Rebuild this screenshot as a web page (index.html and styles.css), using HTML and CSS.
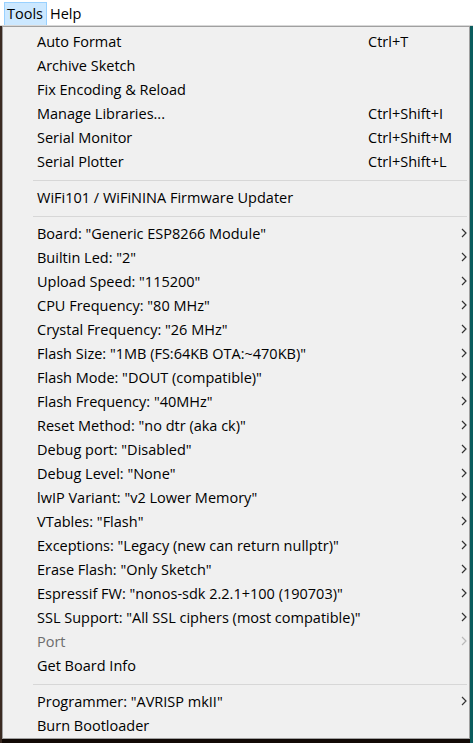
FILE: index.html
```html
<!DOCTYPE html>
<html>
<head>
<meta charset="utf-8">
<link rel="stylesheet" href="styles.css">
</head>
<body>
<div class="menubar">
  <span class="mb-item active">Tools</span>
  <span class="mb-item">Help</span>
</div>
<div class="stage">
  <div class="left-edge"></div>
  <div class="menu">
    <div class="item"><span class="label">Auto Format</span><span class="key">Ctrl+T</span><span class="arr"></span></div>
    <div class="item"><span class="label">Archive Sketch</span><span class="key"></span><span class="arr"></span></div>
    <div class="item"><span class="label">Fix Encoding &amp; Reload</span><span class="key"></span><span class="arr"></span></div>
    <div class="item"><span class="label">Manage Libraries...</span><span class="key">Ctrl+Shift+I</span><span class="arr"></span></div>
    <div class="item"><span class="label">Serial Monitor</span><span class="key">Ctrl+Shift+M</span><span class="arr"></span></div>
    <div class="item"><span class="label">Serial Plotter</span><span class="key">Ctrl+Shift+L</span><span class="arr"></span></div>
    <div class="sep"></div>
    <div class="item"><span class="label">WiFi101 / WiFiNINA Firmware Updater</span><span class="key"></span><span class="arr"></span></div>
    <div class="sep"></div>
    <div class="item sub"><span class="label">Board: "Generic ESP8266 Module"</span><span class="key"></span><span class="arr"><svg viewBox="0 0 6 10" width="6" height="10"><path d="M1 1 L5 5 L1 9" fill="none" stroke="currentColor" stroke-width="1.2"/></svg></span></div>
    <div class="item sub"><span class="label">Builtin Led: "2"</span><span class="key"></span><span class="arr"><svg viewBox="0 0 6 10" width="6" height="10"><path d="M1 1 L5 5 L1 9" fill="none" stroke="currentColor" stroke-width="1.2"/></svg></span></div>
    <div class="item sub"><span class="label">Upload Speed: "115200"</span><span class="key"></span><span class="arr"><svg viewBox="0 0 6 10" width="6" height="10"><path d="M1 1 L5 5 L1 9" fill="none" stroke="currentColor" stroke-width="1.2"/></svg></span></div>
    <div class="item sub"><span class="label">CPU Frequency: "80 MHz"</span><span class="key"></span><span class="arr"><svg viewBox="0 0 6 10" width="6" height="10"><path d="M1 1 L5 5 L1 9" fill="none" stroke="currentColor" stroke-width="1.2"/></svg></span></div>
    <div class="item sub"><span class="label">Crystal Frequency: "26 MHz"</span><span class="key"></span><span class="arr"><svg viewBox="0 0 6 10" width="6" height="10"><path d="M1 1 L5 5 L1 9" fill="none" stroke="currentColor" stroke-width="1.2"/></svg></span></div>
    <div class="item sub"><span class="label">Flash Size: "1MB (FS:64KB OTA:~470KB)"</span><span class="key"></span><span class="arr"><svg viewBox="0 0 6 10" width="6" height="10"><path d="M1 1 L5 5 L1 9" fill="none" stroke="currentColor" stroke-width="1.2"/></svg></span></div>
    <div class="item sub"><span class="label">Flash Mode: "DOUT (compatible)"</span><span class="key"></span><span class="arr"><svg viewBox="0 0 6 10" width="6" height="10"><path d="M1 1 L5 5 L1 9" fill="none" stroke="currentColor" stroke-width="1.2"/></svg></span></div>
    <div class="item sub"><span class="label">Flash Frequency: "40MHz"</span><span class="key"></span><span class="arr"><svg viewBox="0 0 6 10" width="6" height="10"><path d="M1 1 L5 5 L1 9" fill="none" stroke="currentColor" stroke-width="1.2"/></svg></span></div>
    <div class="item sub"><span class="label">Reset Method: "no dtr (aka ck)"</span><span class="key"></span><span class="arr"><svg viewBox="0 0 6 10" width="6" height="10"><path d="M1 1 L5 5 L1 9" fill="none" stroke="currentColor" stroke-width="1.2"/></svg></span></div>
    <div class="item sub"><span class="label">Debug port: "Disabled"</span><span class="key"></span><span class="arr"><svg viewBox="0 0 6 10" width="6" height="10"><path d="M1 1 L5 5 L1 9" fill="none" stroke="currentColor" stroke-width="1.2"/></svg></span></div>
    <div class="item sub"><span class="label">Debug Level: "None"</span><span class="key"></span><span class="arr"><svg viewBox="0 0 6 10" width="6" height="10"><path d="M1 1 L5 5 L1 9" fill="none" stroke="currentColor" stroke-width="1.2"/></svg></span></div>
    <div class="item sub"><span class="label">lwIP Variant: "v2 Lower Memory"</span><span class="key"></span><span class="arr"><svg viewBox="0 0 6 10" width="6" height="10"><path d="M1 1 L5 5 L1 9" fill="none" stroke="currentColor" stroke-width="1.2"/></svg></span></div>
    <div class="item sub"><span class="label">VTables: "Flash"</span><span class="key"></span><span class="arr"><svg viewBox="0 0 6 10" width="6" height="10"><path d="M1 1 L5 5 L1 9" fill="none" stroke="currentColor" stroke-width="1.2"/></svg></span></div>
    <div class="item sub"><span class="label">Exceptions: "Legacy (new can return nullptr)"</span><span class="key"></span><span class="arr"><svg viewBox="0 0 6 10" width="6" height="10"><path d="M1 1 L5 5 L1 9" fill="none" stroke="currentColor" stroke-width="1.2"/></svg></span></div>
    <div class="item sub"><span class="label">Erase Flash: "Only Sketch"</span><span class="key"></span><span class="arr"><svg viewBox="0 0 6 10" width="6" height="10"><path d="M1 1 L5 5 L1 9" fill="none" stroke="currentColor" stroke-width="1.2"/></svg></span></div>
    <div class="item sub"><span class="label">Espressif FW: "nonos-sdk 2.2.1+100 (190703)"</span><span class="key"></span><span class="arr"><svg viewBox="0 0 6 10" width="6" height="10"><path d="M1 1 L5 5 L1 9" fill="none" stroke="currentColor" stroke-width="1.2"/></svg></span></div>
    <div class="item sub"><span class="label">SSL Support: "All SSL ciphers (most compatible)"</span><span class="key"></span><span class="arr"><svg viewBox="0 0 6 10" width="6" height="10"><path d="M1 1 L5 5 L1 9" fill="none" stroke="currentColor" stroke-width="1.2"/></svg></span></div>
    <div class="item sub disabled"><span class="label">Port</span><span class="key"></span><span class="arr"><svg viewBox="0 0 6 10" width="6" height="10"><path d="M1 1 L5 5 L1 9" fill="none" stroke="currentColor" stroke-width="1.2"/></svg></span></div>
    <div class="item"><span class="label">Get Board Info</span><span class="key"></span><span class="arr"></span></div>
    <div class="sep"></div>
    <div class="item sub"><span class="label">Programmer: "AVRISP mkII"</span><span class="key"></span><span class="arr"><svg viewBox="0 0 6 10" width="6" height="10"><path d="M1 1 L5 5 L1 9" fill="none" stroke="currentColor" stroke-width="1.2"/></svg></span></div>
    <div class="item"><span class="label">Burn Bootloader</span><span class="key"></span><span class="arr"></span></div>
  </div>
  <div class="right-edge"></div>
</div>
</body>
</html>
```
FILE: styles.css
```css
html, body {
  margin: 0;
  padding: 0;
}
body {
  background: #120a06;
  font-family: "Open Sans", "Noto Sans", sans-serif;
  font-size: 14.5px;
  color: #000;
  width: 473px;
  height: 743px;
  overflow: hidden;
}
.menubar {
  background: #fff;
  border-bottom: 1px solid #d8d8d8;
  display: flex;
  align-items: stretch;
  padding-left: 4px;
  box-sizing: border-box;
  height: 26px;
}
.mb-item {
  display: flex;
  align-items: center;
  padding: 0 3px 2px 2px;
  margin-top: 2px;
  border: 1px solid transparent;
  border-bottom: none;
}
.mb-item.active {
  background: #cce8ff;
  border-color: #99d1ff;
}
.stage {
  display: flex;
  align-items: flex-start;
}
.left-edge {
  width: 2px;
  height: 717px;
  background: #3a2a22;
}
.right-edge {
  width: 3px;
  height: 717px;
  background: #0b5d5e;
}
.menu {
  width: 468px;
  box-sizing: border-box;
  background: #f0f0f0;
  border: 1px solid #a0a0a0;
  padding: 3px 2px 0 2px;
  box-shadow: 1px 1px 1px rgba(0,0,0,0.2);
}
.item {
  height: 24px;
  box-sizing: border-box;
  padding-bottom: 2px;
  display: grid;
  grid-template-columns: 331px 1fr 6px;
  align-items: center;
  padding-left: 32px;
  white-space: nowrap;
}
.arr {
  display: flex;
  align-items: center;
  color: #333;
}
.disabled {
  color: #6d6d6d;
}
.disabled .arr {
  color: #b9b9b9;
}
.sep {
  height: 12px;
  display: flex;
  align-items: center;
  margin-left: 28px;
}
.sep::before {
  content: "";
  flex: 1;
  height: 1px;
  background: #d7d7d7;
}
```
